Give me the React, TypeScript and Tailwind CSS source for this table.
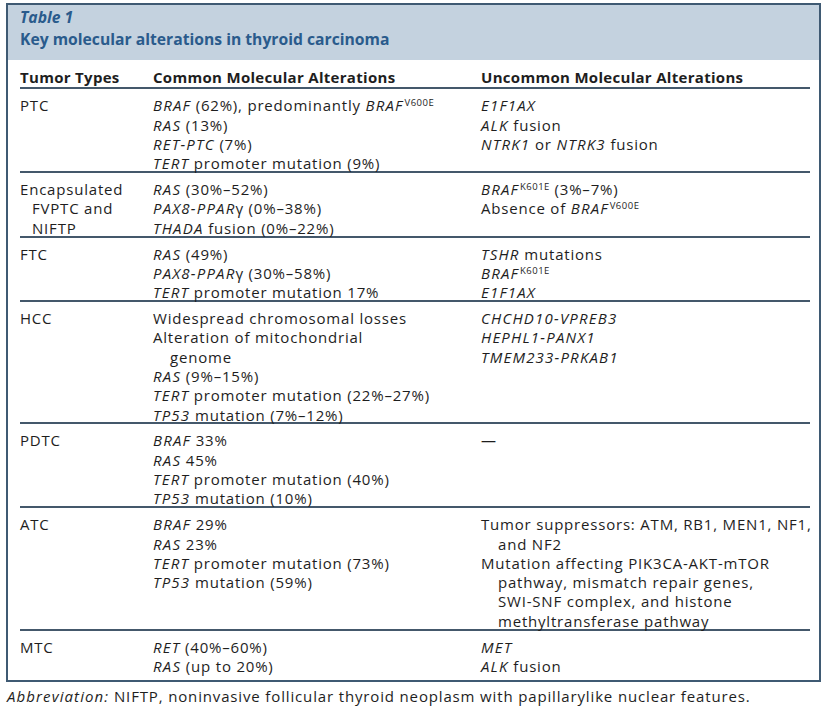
import React from "react";

const Sup = ({ children }: { children: React.ReactNode }) => (
  <span className="not-italic text-[9.5px] tracking-[0.5px] relative top-[-5px] ml-[1px] leading-none">{children}</span>
);

const Item = ({ children }: { children: React.ReactNode }) => (
  <div className="whitespace-nowrap pl-[17px] -indent-[17px] [&_i]:tracking-[1.2px]">{children}</div>
);

type Row = { t: React.ReactNode; c: React.ReactNode[]; u: React.ReactNode[] };

const rows: Row[] = [
  {
    t: "PTC",
    c: [
      <><i>BRAF</i> (62%), predominantly <i>BRAF</i><Sup>V600E</Sup></>,
      <><i>RAS</i> (13%)</>,
      <><i>RET-PTC</i> (7%)</>,
      <><i>TERT</i> promoter mutation (9%)</>,
    ],
    u: [<><i>E1F1AX</i></>, <><i>ALK</i> fusion</>, <><i>NTRK1</i> or <i>NTRK3</i> fusion</>],
  },
  {
    t: <>Encapsulated<br />FVPTC and<br />NIFTP</>,
    c: [
      <><i>RAS</i> (30%–52%)</>,
      <><i>PAX8-PPAR</i>γ (0%–38%)</>,
      <><i>THADA</i> fusion (0%–22%)</>,
    ],
    u: [<><i>BRAF</i><Sup>K601E</Sup> (3%–7%)</>, <>Absence of <i>BRAF</i><Sup>V600E</Sup></>],
  },
  {
    t: "FTC",
    c: [
      <><i>RAS</i> (49%)</>,
      <><i>PAX8-PPAR</i>γ (30%–58%)</>,
      <><i>TERT</i> promoter mutation 17%</>,
    ],
    u: [<><i>TSHR</i> mutations</>, <><i>BRAF</i><Sup>K601E</Sup></>, <><i>E1F1AX</i></>],
  },
  {
    t: "HCC",
    c: [
      <>Widespread chromosomal losses</>,
      <>Alteration of mitochondrial<br />genome</>,
      <><i>RAS</i> (9%–15%)</>,
      <><i>TERT</i> promoter mutation (22%–27%)</>,
      <><i>TP53</i> mutation (7%–12%)</>,
    ],
    u: [<><i>CHCHD10-VPREB3</i></>, <><i>HEPHL1-PANX1</i></>, <><i>TMEM233-PRKAB1</i></>],
  },
  {
    t: "PDTC",
    c: [
      <><i>BRAF</i> 33%</>,
      <><i>RAS</i> 45%</>,
      <><i>TERT</i> promoter mutation (40%)</>,
      <><i>TP53</i> mutation (10%)</>,
    ],
    u: [<>—</>],
  },
  {
    t: "ATC",
    c: [
      <><i>BRAF</i> 29%</>,
      <><i>RAS</i> 23%</>,
      <><i>TERT</i> promoter mutation (73%)</>,
      <><i>TP53</i> mutation (59%)</>,
    ],
    u: [
      <>Tumor suppressors: ATM, RB1, MEN1, NF1,<br />and NF2</>,
      <>Mutation affecting PIK3CA-AKT-mTOR<br />pathway, mismatch repair genes,<br />SWI-SNF complex, and histone<br />methyltransferase pathway</>,
    ],
  },
  {
    t: "MTC",
    c: [<><i>RET</i> (40%–60%)</>, <><i>RAS</i> (up to 20%)</>],
    u: [<><i>MET</i></>, <><i>ALK</i> fusion</>],
  },
];

export default function App() {
  return (
    <div
      className="w-[825px] h-[707px] bg-white overflow-hidden text-[#1e1e1e]"
      style={{ fontFamily: '"Open Sans", "Noto Sans", sans-serif' }}
    >
      <div className="ml-[6px] mt-[3px] w-[815px] h-[679px] border-2 border-[#3f5a73]">
        <div className="bg-[#c4d2df] h-[55px] pl-[12px] pt-[2px] text-[#2a5b8c] font-bold">
          <div className="italic text-[15.7px] leading-[21px]">Table 1</div>
          <div className="text-[15.7px] leading-[22px]">Key molecular alterations in thyroid carcinoma</div>
        </div>
        <div className="pl-[12px] pr-[9px] text-[15px] leading-[19.3px] tracking-[0.8px]">
          <div className="grid grid-cols-[133px_328px_1fr] pt-[8px] border-b-2 border-[#44586b] font-bold tracking-[0.3px]">
            <div className="-mb-[1px]">Tumor Types</div>
            <div>Common Molecular Alterations</div>
            <div>Uncommon Molecular Alterations</div>
          </div>
          {rows.map((r, i) => (
            <div
              key={i}
              className={
                "grid grid-cols-[133px_328px_1fr] pt-[7px] " +
                (i < rows.length - 1 ? "border-b-2 border-[#44586b]" : "")
              }
            >
              <div className="-mb-[2.4px] pl-[12px] -indent-[12px]">{r.t}</div>
              <div className="-mb-[2.4px]">
                {r.c.map((x, j) => (
                  <Item key={j}>{x}</Item>
                ))}
              </div>
              <div className="-mb-[2.4px]">
                {r.u.map((x, j) => (
                  <Item key={j}>{x}</Item>
                ))}
              </div>
            </div>
          ))}
        </div>
      </div>
      <div className="pl-[7px] pt-[5px] text-[15px] leading-[18px] tracking-[0.85px]">
        <i className="tracking-[1.1px]">Abbreviation:</i> NIFTP, noninvasive follicular thyroid neoplasm with papillarylike nuclear features.
      </div>
    </div>
  );
}
